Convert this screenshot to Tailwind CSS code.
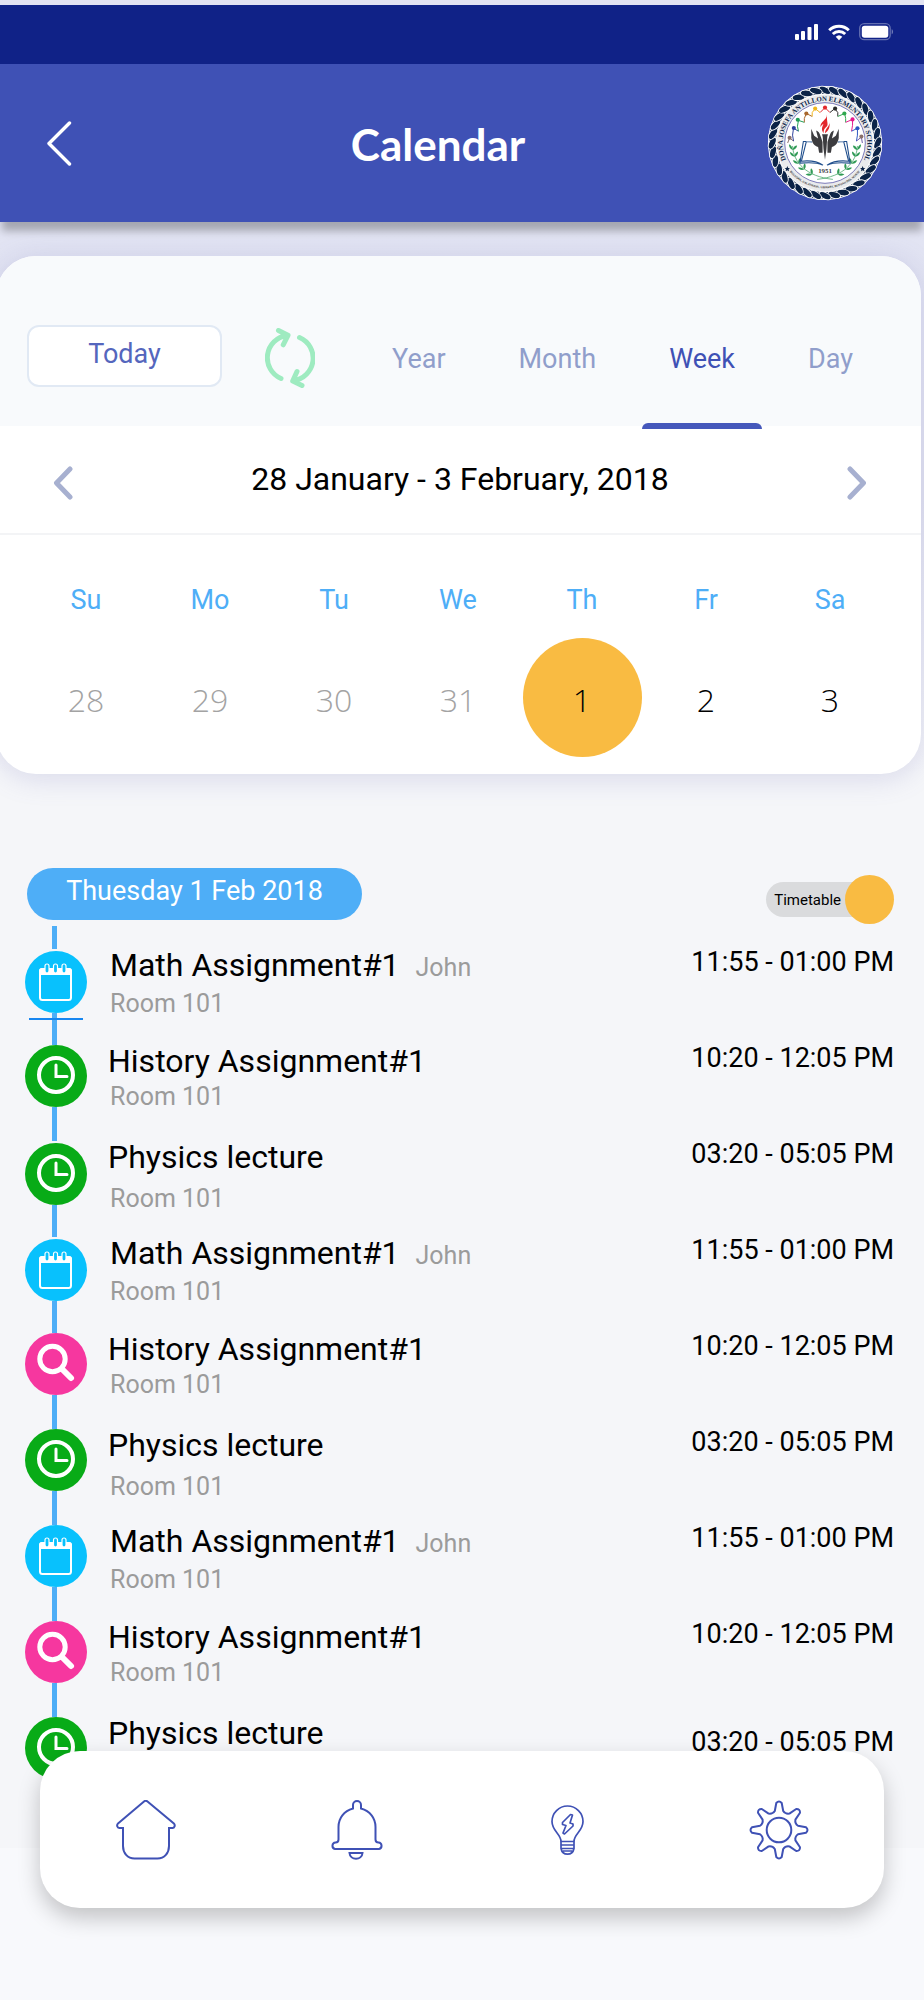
<!DOCTYPE html>
<html lang="en">
<head>
  <meta charset="UTF-8" />
  <meta name="viewport" content="width=device-width, initial-scale=1.0" />
  <title>Calendar</title>
  <script src="https://cdn.jsdelivr.net/npm/@tailwindcss/browser@4"></script>
</head>
<body class="min-h-screen bg-[#f8f9fc] font-[Roboto,sans-serif] text-black">

  <!-- Shared icons -->
  <svg class="hidden" aria-hidden="true">
    <symbol id="icon-calendar" viewBox="0 0 62 62">
      <rect x="15" y="18" width="31" height="31" rx="2.5" fill="none" stroke="#fff" stroke-width="2" />
      <path d="M14 24v-4a3 3 0 0 1 3-3h27a3 3 0 0 1 3 3v4z" fill="#fff" />
      <g fill="#08c1fd" stroke="#fff" stroke-width="1.2">
        <rect x="20" y="13" width="4" height="9" rx="2" />
        <rect x="28.5" y="13" width="4" height="9" rx="2" />
        <rect x="37" y="13" width="4" height="9" rx="2" />
      </g>
    </symbol>
    <symbol id="icon-clock" viewBox="0 0 62 62">
      <circle cx="31" cy="30" r="17" fill="none" stroke="#fff" stroke-width="4" />
      <path d="M31 20v11.5h11" fill="none" stroke="#fff" stroke-width="3" stroke-linecap="round" />
    </symbol>
    <symbol id="icon-search" viewBox="0 0 62 62">
      <circle cx="27.5" cy="26" r="12.7" fill="none" stroke="#fff" stroke-width="5" />
      <path d="M37.5 36.5l8.5 8.5" stroke="#fff" stroke-width="6" stroke-linecap="round" />
    </symbol>
  </svg>

  <div class="h-[5px] bg-[#e2e3f2]"></div>

  <!-- Status bar -->
  <div class="flex h-[59px] items-start justify-end gap-[9px] bg-[#102287] pt-[18px] pr-[30px]">
    <svg class="h-[18px] w-6" viewBox="0 0 24 18" fill="#fff">
      <rect x="0" y="11" width="4" height="6" rx="1" />
      <rect x="6" y="8" width="4" height="9" rx="1" />
      <rect x="12.5" y="4" width="4" height="13" rx="1" />
      <rect x="19" y="1" width="4" height="16" rx="1" />
    </svg>
    <svg class="h-[18px] w-[22px]" viewBox="0 0 22 18" fill="none" stroke="#fff" stroke-width="3">
      <path d="M1.2 7.2a14 14 0 0 1 19.6 0" />
      <path d="M4.8 11a9 9 0 0 1 12.4 0" />
      <path d="M11 17.2l-3.3-3.4a4.8 4.8 0 0 1 6.6 0z" fill="#fff" stroke="none" />
    </svg>
    <svg class="h-[18px] w-[35px]" viewBox="0 0 35 18">
      <rect x="0.7" y="0.7" width="30.5" height="16" rx="4.5" fill="none" stroke="#fff" stroke-opacity=".35" stroke-width="1.3" />
      <rect x="2.8" y="2.8" width="26.5" height="12" rx="2.8" fill="#fff" />
      <path d="M32.7 6.3c1.8.6 1.8 4.4 0 5z" fill="#fff" fill-opacity=".4" />
    </svg>
  </div>

  <!-- Header -->
  <header class="relative flex h-[158px] items-center bg-[#3f51b5] pr-10 pl-[46px] shadow-[0_11px_8px_-2px_rgba(0,0,0,0.27)]">
    <button type="button" aria-label="Back" class="w-16">
      <svg class="h-[46px] w-[27px]" viewBox="0 0 27 46" fill="none" stroke="#fff" stroke-width="3.4" stroke-linecap="round" stroke-linejoin="round">
        <path d="M23.5 3L3 23.5 23.5 44" />
      </svg>
    </button>
    <h1 class="flex-1 pt-0.5 text-center font-[Lato,sans-serif] text-[44px] leading-[54px] font-bold text-white">Calendar</h1>
    <svg class="size-[118px]" viewBox="0 0 120 120" role="img" aria-label="School seal">
      <defs>
        <path id="arc-top" d="M20.6 77.5A43 43 0 1 1 99.4 77.5" />
        <path id="arc-bottom" d="M24 89A46.5 46.5 0 0 0 96 89" />
        <ellipse id="strand" cx="60" cy="6.3" rx="6.6" ry="3.3" transform="rotate(24 60 6.3)" />
        <path id="leaf" d="M0 0C-3 -1.5 -3.5 -4 -3 -6C-.8 -4.5 0 -2.5 0 0ZM0 0C1 -3 3 -4 5 -4C4.5 -1.5 2.5 0 0 0Z" />
      </defs>
      <circle cx="60" cy="60" r="58" fill="#fff" />
      <circle cx="60" cy="60" r="53.5" fill="none" stroke="#0b2347" stroke-width="7" />
      <g id="rope" fill="#0b2347" stroke="#fff" stroke-width="1"></g>
      <circle cx="60" cy="60" r="49" fill="#e9eaec" />
      <circle cx="60" cy="60" r="41" fill="#fff" stroke="#5a58a8" stroke-width=".8" />
      <text fill="#0b2347" class="font-['Liberation_Serif',serif] text-[7px] font-bold"><textPath href="#arc-top" startOffset="50%" text-anchor="middle">DOÑA JOSEFA ANTILLON ELEMENTARY SCHOOL</textPath></text>
      <text fill="#444" class="font-['Liberation_Sans',sans-serif] text-[3px] font-bold"><textPath href="#arc-bottom" startOffset="50%" text-anchor="middle">BULUSAN, CALATRAVA, LIBRARY, BUTUAN DEL NORTE</textPath></text>
      <path fill="#0b2347" d="M21.7 83.5l.8 1.8 1.9.2-1.4 1.3.4 1.9-1.7-1-1.7 1 .4-1.9-1.4-1.3 1.9-.2zM98.3 83.5l.8 1.8 1.9.2-1.4 1.3.4 1.9-1.7-1-1.7 1 .4-1.9-1.4-1.3 1.9-.2z" />
      <!-- ring of children -->
      <g fill="none" stroke-width="1">
        <path stroke="#8a6f6b" d="M22 60l2-5 4 3" />
        <path stroke="#2b3f9b" d="M28 58l-1-6 1-7 5 3" />
        <path stroke="#1f9d57" d="M33 48l-1-5 1-6 6 2" />
        <path stroke="#a8672c" d="M39 39l0-4 2-5 6 3" />
        <path stroke="#f1b61c" d="M47 33l0-4 3-4 5 4" />
        <path stroke="#e2262b" d="M55 29l5-5 5 5" />
        <path stroke="#2a2a2a" d="M65 29l5-4 3 4 0 4" />
        <path stroke="#2fa84f" d="M73 33l7-3 1 5 0 4" />
        <path stroke="#e5188d" d="M81 39l7-3 0 6-1 6" />
        <path stroke="#2b55c0" d="M87 48l6-3 0 7-1 6" />
        <path stroke="#6b5aa8" d="M92 58l5-4 1 6" />
      </g>
      <circle cx="24" cy="54.7" r="2.1" fill="#8a6f6b" />
      <circle cx="28.3" cy="44.7" r="2.1" fill="#2b3f9b" />
      <circle cx="32.3" cy="36.3" r="2.1" fill="#1f9d57" />
      <circle cx="41" cy="30" r="2.1" fill="#a8672c" />
      <circle cx="50" cy="25" r="2.1" fill="#f1b61c" />
      <circle cx="60" cy="24" r="2.1" fill="#e2262b" />
      <circle cx="70.3" cy="25" r="2.1" fill="#2a2a2a" />
      <circle cx="79.7" cy="30" r="2.1" fill="#2fa84f" />
      <circle cx="88" cy="36" r="2.1" fill="#e5188d" />
      <circle cx="93" cy="45" r="2.1" fill="#2b55c0" />
      <circle cx="97" cy="53.5" r="2.1" fill="#8a6f6b" />
      <!-- laurel -->
      <g fill="none" stroke="#2f9a55" stroke-width=".7">
        <path d="M27 63C28 80 41 94 68 97" />
        <path d="M93 63C92 80 79 94 52 97" />
      </g>
      <g fill="#2f9a55">
        <use href="#leaf" transform="translate(27 67) rotate(-5)" />
        <use href="#leaf" transform="translate(29 74) rotate(-18)" />
        <use href="#leaf" transform="translate(33 81) rotate(-32)" />
        <use href="#leaf" transform="translate(39 87) rotate(-48)" />
        <use href="#leaf" transform="translate(47 92) rotate(-62)" />
        <use href="#leaf" transform="translate(93 67) scale(-1 1) rotate(-5)" />
        <use href="#leaf" transform="translate(91 74) scale(-1 1) rotate(-18)" />
        <use href="#leaf" transform="translate(87 81) scale(-1 1) rotate(-32)" />
        <use href="#leaf" transform="translate(81 87) scale(-1 1) rotate(-48)" />
        <use href="#leaf" transform="translate(73 92) scale(-1 1) rotate(-62)" />
      </g>
      <!-- book -->
      <g fill="none" stroke="#1f4e8c" stroke-width="1.1">
        <path d="M47 59l-6-.5-5 20c9-1 16 0 22 4M41 58.5l-3 0-3.500 22c10-1 18-.5 23 2" />
        <path d="M73 59l6-.5 5 20c-9-1-16 0-22 4M79 58.5l3 0 3.500 22c-10-1-18-.5-23 2" />
      </g>
      <!-- hands and torch -->
      <g fill="#3c3c3f">
        <path d="M46 45.5l3 7 4 3-2-8c2 0 3.500 2 5 7l1.500 4.500V70h-3.500l-1-6c-4-1-6-4-7-9z" />
        <path d="M74 45.500l-3 7-4 3 2-8c-2 0-3.500 2-5 7l-1.500 4.500V70h3.500l1-6c4-1 6-4 7-9z" />
        <path d="M57 51h6l-.7 3-.8 12-1.500 11-1.500-11-.8-12z" />
      </g>
      <path fill="#e2262b" d="M62 31c0 6-7.500 7-6.500 13 .5-1.500 1.500-2.500 3-3.500-1.500 3.500-2.500 6 0 9.500 0-3.500 1-5 3-6.500C64 41 61.500 39 62 31ZM64.500 38.500c1 4-4.500 7-4.500 11.500C63.500 48 65.500 44 64.500 38.500Z" />
      <text x="60" y="90.5" text-anchor="middle" fill="#3c3c3f" class="font-['Liberation_Serif',serif] text-[7px] font-bold">1951</text>
    </svg>
  </header>

  <main class="bg-[#f5f6f9] pb-[42px]">
    <div class="bg-linear-to-b from-[#e2e4f3] via-[#e2e3f0] to-[#f5f6f9] pt-[34px]">
      <!-- Calendar card -->
      <section class="mr-[3px] -ml-1 overflow-hidden rounded-[40px] bg-white shadow-[0_4px_28px_rgba(110,110,180,0.22)]">
        <div class="flex h-[170px] items-stretch justify-between bg-[#f8fafc] pr-[41px] pl-[31px]">
          <div class="flex items-center gap-[43px] pt-[31px] pb-0.5">
            <button type="button" class="h-[62px] w-[195px] rounded-xl border-2 border-[#e1e9f4] bg-white pb-1 text-[27px] leading-8 text-[#5566bd]">Today</button>
            <button type="button" aria-label="Refresh" class="pt-1">
              <svg class="h-[60px] w-[50px]" viewBox="0 0 50 60" fill="none" stroke="#9eebc0" stroke-width="5" stroke-linecap="round" stroke-linejoin="round">
                <path d="M16 50.500A22.500 22.500 0 0 1 22 7.500M13.500 2.500l9.500 4.800-4.800 9.500" />
                <path d="M34.500 9.500A22.500 22.500 0 0 1 28.500 52.500M32 43.500l-4.300 9.500 9.300 4.500" />
              </svg>
            </button>
          </div>
          <nav class="flex gap-[19px] pt-[87px] text-[27px] leading-8 text-[#909ecb]">
            <a href="#year" class="px-[27px]">Year</a>
            <a href="#month" class="px-[27px]">Month</a>
            <a href="#week" aria-current="page" class="relative px-[27px] text-[#3f51b5]">Week<span class="absolute inset-x-0 -bottom-[3px] h-[6px] rounded-t-md bg-[#4558bb]"></span></a>
            <a href="#day" class="px-[27px]">Day</a>
          </nav>
        </div>

        <div class="flex h-[109px] items-center justify-between border-b-2 border-[#f3f4f6] pr-[54px] pb-0.5 pl-[57px]">
          <button type="button" aria-label="Previous week" class="pt-2">
            <svg class="h-9 w-5" viewBox="0 0 20 36" fill="none" stroke="#a7b0d0" stroke-width="5" stroke-linecap="round" stroke-linejoin="round">
              <path d="M17 4L3.500 18 17 32" />
            </svg>
          </button>
          <h2 class="text-[32px] leading-10">28 January - 3 February, 2018</h2>
          <button type="button" aria-label="Next week" class="pt-2">
            <svg class="h-9 w-5" viewBox="0 0 20 36" fill="none" stroke="#a7b0d0" stroke-width="5" stroke-linecap="round" stroke-linejoin="round">
              <path d="M3 4l13.500 14L3 32" />
            </svg>
          </button>
        </div>

        <div class="pt-[49px] pr-[29px] pb-[17px] pl-7">
          <table class="w-full table-fixed text-center">
            <thead class="text-[27px] leading-8 text-[#4eaef7]">
              <tr>
                <th scope="col" class="pb-[22px] font-normal">Su</th>
                <th scope="col" class="pb-[22px] font-normal">Mo</th>
                <th scope="col" class="pb-[22px] font-normal">Tu</th>
                <th scope="col" class="pb-[22px] font-normal">We</th>
                <th scope="col" class="pb-[22px] font-normal">Th</th>
                <th scope="col" class="pb-[22px] font-normal">Fr</th>
                <th scope="col" class="pb-[22px] font-normal">Sa</th>
              </tr>
            </thead>
            <tbody class="font-['Open_Sans',sans-serif] text-[32px] leading-10 font-light">
              <tr>
                <td class="pt-1 text-[#a3a3a3]">28</td>
                <td class="pt-1 text-[#a3a3a3]">29</td>
                <td class="pt-1 text-[#a3a3a3]">30</td>
                <td class="pt-1 text-[#a3a3a3]">31</td>
                <td><span class="mx-auto flex size-[119px] items-center justify-center rounded-full bg-[#f9bb42] pt-1">1</span></td>
                <td class="pt-1">2</td>
                <td class="pt-1">3</td>
              </tr>
            </tbody>
          </table>
        </div>
      </section>
    </div>

    <!-- Day agenda -->
    <div class="flex items-start justify-between pt-[94px] pr-[30px] pl-[27px]">
      <p class="flex h-[52px] w-[335px] items-center justify-center rounded-full bg-[#4eaef7] pb-1.5 text-[27px] leading-8 text-white">Thuesday 1 Feb 2018</p>
      <label class="mt-[7px] flex items-center text-[15px] leading-5">
        <span class="-mr-7 flex h-[35px] items-center rounded-l-full bg-[#dadbdd] pr-8 pl-2">Timetable</span>
        <input type="checkbox" checked class="size-[49px] appearance-none rounded-full bg-[#f9bb42]" />
      </label>
    </div>

    <div class="mt-0.5 ml-[52px] h-4 w-[5px] bg-[#4eaef7]"></div>
    <ul class="pr-[30px] pl-[25px]">
      <li class="flex h-24 items-start">
        <div class="relative flex h-full w-[62px] flex-col items-center">
          <div class="mr-[3px] mb-0.5 h-[7px] w-[5px] bg-[#4eaef7]"></div>
          <svg class="size-[62px] rounded-full bg-[#08c1fd]"><use href="#icon-calendar" /></svg>
          <div class="mr-[3px] w-[5px] flex-1 bg-[#4eaef7]"></div>
          <div class="absolute bottom-[18px] h-0.5 w-[54px] bg-[#1786f0]"></div>
        </div>
        <div class="flex-1 pt-[3px] pl-[23px]">
          <h3 class="flex items-baseline gap-4 text-[32px] leading-10">Math Assignment#1 <small class="text-[25px] text-[#9b9b9b]">John</small></h3>
          <p class="text-[25px] leading-8 text-[#9b9b9b]">Room 101</p>
        </div>
        <time class="text-[27px] leading-10">11:55 - 01:00 PM</time>
      </li>
      <li class="flex h-24 items-start">
        <div class="flex h-full w-[62px] flex-col items-center">
          <div class="mr-[3px] h-[7px] w-[5px] bg-[#4eaef7]"></div>
          <svg class="size-[62px] rounded-full bg-[#08ab17]"><use href="#icon-clock" /></svg>
          <div class="mr-[3px] w-[5px] flex-1 bg-[#4eaef7]"></div>
        </div>
        <div class="flex-1 pt-[3px] pl-[21px]">
          <h3 class="text-[32px] leading-10">History Assignment#1</h3>
          <p class="pl-0.5 text-[25px] leading-8 text-[#9b9b9b]">Room 101</p>
        </div>
        <time class="text-[27px] leading-10">10:20 - 12:05 PM</time>
      </li>
      <li class="flex h-24 items-start">
        <div class="flex h-full w-[62px] flex-col items-center">
          <div class="mr-[3px] mb-0.5 h-[7px] w-[5px] bg-[#4eaef7]"></div>
          <svg class="size-[62px] rounded-full bg-[#08ab17]"><use href="#icon-clock" /></svg>
          <div class="mr-[3px] w-[5px] flex-1 bg-[#4eaef7]"></div>
        </div>
        <div class="flex-1 pt-[3px] pl-[21px]">
          <h3 class="text-[32px] leading-10">Physics lecture</h3>
          <p class="mt-1.5 pl-0.5 text-[25px] leading-8 text-[#9b9b9b]">Room 101</p>
        </div>
        <time class="text-[27px] leading-10">03:20 - 05:05 PM</time>
      </li>
      <li class="flex h-24 items-start">
        <div class="flex h-full w-[62px] flex-col items-center">
          <div class="mr-[3px] mb-0.5 h-[7px] w-[5px] bg-[#4eaef7]"></div>
          <svg class="size-[62px] rounded-full bg-[#08c1fd]"><use href="#icon-calendar" /></svg>
          <div class="mr-[3px] w-[5px] flex-1 bg-[#4eaef7]"></div>
        </div>
        <div class="flex-1 pt-[3px] pl-[23px]">
          <h3 class="flex items-baseline gap-4 text-[32px] leading-10">Math Assignment#1 <small class="text-[25px] text-[#9b9b9b]">John</small></h3>
          <p class="text-[25px] leading-8 text-[#9b9b9b]">Room 101</p>
        </div>
        <time class="text-[27px] leading-10">11:55 - 01:00 PM</time>
      </li>
      <li class="flex h-24 items-start">
        <div class="flex h-full w-[62px] flex-col items-center">
          <div class="mr-[3px] h-[7px] w-[5px] bg-[#4eaef7]"></div>
          <svg class="size-[62px] rounded-full bg-[#f6379f]"><use href="#icon-search" /></svg>
          <div class="mr-[3px] w-[5px] flex-1 bg-[#4eaef7]"></div>
        </div>
        <div class="flex-1 pt-[3px] pl-[21px]">
          <h3 class="text-[32px] leading-10">History Assignment#1</h3>
          <p class="pl-0.5 text-[25px] leading-8 text-[#9b9b9b]">Room 101</p>
        </div>
        <time class="text-[27px] leading-10">10:20 - 12:05 PM</time>
      </li>
      <li class="flex h-24 items-start">
        <div class="flex h-full w-[62px] flex-col items-center">
          <div class="mr-[3px] h-[7px] w-[5px] bg-[#4eaef7]"></div>
          <svg class="size-[62px] rounded-full bg-[#08ab17]"><use href="#icon-clock" /></svg>
          <div class="mr-[3px] w-[5px] flex-1 bg-[#4eaef7]"></div>
        </div>
        <div class="flex-1 pt-[3px] pl-[21px]">
          <h3 class="text-[32px] leading-10">Physics lecture</h3>
          <p class="mt-1.5 pl-0.5 text-[25px] leading-8 text-[#9b9b9b]">Room 101</p>
        </div>
        <time class="text-[27px] leading-10">03:20 - 05:05 PM</time>
      </li>
      <li class="flex h-24 items-start">
        <div class="flex h-full w-[62px] flex-col items-center">
          <div class="mr-[3px] h-[7px] w-[5px] bg-[#4eaef7]"></div>
          <svg class="size-[62px] rounded-full bg-[#08c1fd]"><use href="#icon-calendar" /></svg>
          <div class="mr-[3px] w-[5px] flex-1 bg-[#4eaef7]"></div>
        </div>
        <div class="flex-1 pt-[3px] pl-[23px]">
          <h3 class="flex items-baseline gap-4 text-[32px] leading-10">Math Assignment#1 <small class="text-[25px] text-[#9b9b9b]">John</small></h3>
          <p class="text-[25px] leading-8 text-[#9b9b9b]">Room 101</p>
        </div>
        <time class="text-[27px] leading-10">11:55 - 01:00 PM</time>
      </li>
      <li class="flex h-24 items-start">
        <div class="flex h-full w-[62px] flex-col items-center">
          <div class="mr-[3px] h-[7px] w-[5px] bg-[#4eaef7]"></div>
          <svg class="size-[62px] rounded-full bg-[#f6379f]"><use href="#icon-search" /></svg>
          <div class="mr-[3px] w-[5px] flex-1 bg-[#4eaef7]"></div>
        </div>
        <div class="flex-1 pt-[3px] pl-[21px]">
          <h3 class="text-[32px] leading-10">History Assignment#1</h3>
          <p class="pl-0.5 text-[25px] leading-8 text-[#9b9b9b]">Room 101</p>
        </div>
        <time class="text-[27px] leading-10">10:20 - 12:05 PM</time>
      </li>
      <li class="flex h-24 items-start">
        <div class="flex h-full w-[62px] flex-col items-center">
          <div class="mr-[3px] h-[7px] w-[5px] bg-[#4eaef7]"></div>
          <svg class="size-[62px] rounded-full bg-[#08ab17]"><use href="#icon-clock" /></svg>
        </div>
        <div class="flex-1 pt-[3px] pl-[21px]">
          <h3 class="text-[32px] leading-10">Physics lecture</h3>
        </div>
        <time class="pt-3 text-[27px] leading-10">03:20 - 05:05 PM</time>
      </li>
    </ul>
  </main>

  <!-- Bottom navigation -->
  <nav class="fixed inset-x-10 bottom-[92px] grid h-[157px] grid-cols-4 items-center justify-items-center rounded-[40px] bg-white text-[#3f51b5] shadow-[0_10px_22px_rgba(0,0,0,0.22)]">
    <a href="#home" aria-label="Home">
      <svg class="size-[60px]" viewBox="0 0 60 60" fill="none" stroke="currentColor" stroke-width="2">
        <path d="M28 1.500L2 23.600C.4 25 1.200 28 3.200 28H7V46C7 53 11.500 58.500 18.500 58.500H41.500C48.500 58.500 53 53 53 46V28H56.500C58.500 28 59.500 25 57.900 23.600L31.500 1.500C30.500.7 29 .7 28 1.500Z" />
      </svg>
    </a>
    <a href="#alerts" aria-label="Notifications">
      <svg class="h-[60px] w-[52px]" viewBox="0 0 52 60" fill="none" stroke="currentColor" stroke-width="2">
        <path d="M22 8.500V5a4 4 0 0 1 8 0V8.500C39 11 44.500 18 44.500 27V39.500C44.500 41.500 46 42.500 47.500 42.500A3.300 3.300 0 0 1 48 49H4A3.300 3.300 0 0 1 4.500 42.500C6.500 42.500 7.500 41.500 7.500 39.500V27C7.500 18 13 11 22 8.500Z" />
        <path d="M18.500 53H31.500C31 60.500 19 60.500 18.500 53Z" />
      </svg>
    </a>
    <a href="#ideas" aria-label="Ideas">
      <svg class="h-[50px] w-[33px]" viewBox="0 0 33 50" fill="none" stroke="currentColor" stroke-width="1.7" stroke-linejoin="round">
        <path d="M10 36.500C10 29 1 26 1 16.500A15.500 15.500 0 0 1 32 16.500C32 26 23 29 23 36.500Z" />
        <path d="M10 36.500V43.500C11.500 51 21.500 51 23 43.500V36.500M10 40H23M10 43.500H23M12 46H21" />
        <path d="M19.500 9.500L11.500 17.500V19.500L15 20.500 12 28 13.500 29 22 21V19L19 18 21.500 10Z" />
      </svg>
    </a>
    <a href="#settings" aria-label="Settings">
      <svg class="size-[60px]" viewBox="0 0 60 60" fill="none" stroke="currentColor" stroke-width="2" stroke-linejoin="round">
        <circle cx="30" cy="30" r="12.3" />
        <path d="M25.800 11L27.300 3Q30 0 32.700 3L34.200 11Q36.500 14.300 40.400 13.600L47.200 9Q51.200 8.800 51 12.800L46.400 19.600Q45.700 23.500 49 25.800L57 27.300Q60 30 57 32.700L49 34.200Q45.700 36.500 46.400 40.400L51 47.200Q51.200 51.200 47.200 51L40.400 46.400Q36.500 45.700 34.200 49L32.700 57Q30 60 27.300 57L25.800 49Q23.500 45.700 19.600 46.400L12.800 51Q8.800 51.200 9 47.200L13.600 40.400Q14.300 36.500 11 34.200L3 32.700Q0 30 3 27.300L11 25.800Q14.300 23.500 13.600 19.600L9 12.800Q8.800 8.800 12.800 9L19.600 13.600Q23.500 14.300 25.800 11Z" />
      </svg>
    </a>
  </nav>
  <div class="h-[149px]"></div>

  <script>
    // repeat the rope strand around the seal
    const rope = document.getElementById("rope");
    for (let i = 0; i < 36; i++) {
      const strand = document.createElementNS("http://www.w3.org/2000/svg", "use");
      strand.setAttribute("href", "#strand");
      strand.setAttribute("transform", `rotate(${i * 10} 60 60)`);
      rope.appendChild(strand);
    }
  </script>
</body>
</html>
